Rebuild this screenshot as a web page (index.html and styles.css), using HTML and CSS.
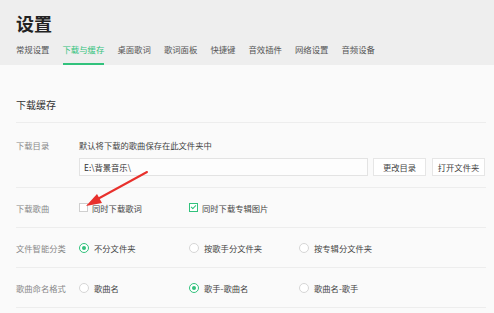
FILE: index.html
```html
<!DOCTYPE html>
<html lang="zh-CN">
<head>
    <meta charset="UTF-8">
    <meta name="viewport" content="width=device-width, initial-scale=1.0">
    <title>设置</title>
    <link rel="stylesheet" href="styles.css">
</head>
<body>
    <!-- Header -->
    <header class="header">
        <h1 class="title">设置</h1>
        <nav class="tabs">
            <a href="#" class="tab">常规设置</a>
            <a href="#" class="tab active">下载与缓存</a>
            <a href="#" class="tab">桌面歌词</a>
            <a href="#" class="tab">歌词面板</a>
            <a href="#" class="tab">快捷键</a>
            <a href="#" class="tab">音效插件</a>
            <a href="#" class="tab">网络设置</a>
            <a href="#" class="tab">音频设备</a>
        </nav>
    </header>

    <!-- Content -->
    <main class="content">
        <h2 class="section-title">下载缓存</h2>

        <div class="row row-dir">
            <div class="label">下载目录</div>
            <div class="body">
                <p class="hint">默认将下载的歌曲保存在此文件夹中</p>
                <div class="dir-line">
                    <div class="path-box">E:\背景音乐\</div>
                    <button class="btn">更改目录</button>
                    <button class="btn">打开文件夹</button>
                </div>
            </div>
        </div>

        <div class="row">
            <div class="label">下载歌曲</div>
            <div class="options">
                <label class="opt"><span class="check"></span>同时下载歌词</label>
                <label class="opt"><span class="check on"></span>同时下载专辑图片</label>
            </div>
        </div>

        <div class="row">
            <div class="label">文件智能分类</div>
            <div class="options">
                <label class="opt"><span class="radio on"></span>不分文件夹</label>
                <label class="opt"><span class="radio"></span>按歌手分文件夹</label>
                <label class="opt"><span class="radio"></span>按专辑分文件夹</label>
            </div>
        </div>

        <div class="row">
            <div class="label">歌曲命名格式</div>
            <div class="options">
                <label class="opt"><span class="radio"></span>歌曲名</label>
                <label class="opt"><span class="radio on"></span>歌手-歌曲名</label>
                <label class="opt"><span class="radio"></span>歌曲名-歌手</label>
            </div>
        </div>
    </main>

    <!-- red annotation arrow -->
    <svg class="arrow" width="494" height="313" viewBox="0 0 494 313">
        <line x1="147" y1="172" x2="94" y2="201" stroke="#e8302c" stroke-width="2" stroke-linecap="round"/>
        <polygon points="86,206 97,194 102,203" fill="#e8302c"/>
    </svg>
</body>
</html>
```

FILE: styles.css
```css
* {
    margin: 0;
    padding: 0;
    box-sizing: border-box;
}

body {
    font-family: "Noto Sans CJK SC", "Noto Sans", sans-serif;
    background-color: #fafafa;
    color: #333;
    width: 494px;
    height: 313px;
    overflow: hidden;
    position: relative;
}

/* Header */
.header {
    background-color: #eeeeee;
    height: 65px;
    padding: 0 16px;
}

.title {
    font-size: 18px;
    font-weight: bold;
    color: #222;
    line-height: 22px;
    padding-top: 12px;
}

.tabs {
    display: flex;
    gap: 13px;
    margin-top: 9px;
}

.tab {
    font-size: 8.4px;
    color: #555;
    text-decoration: none;
    line-height: 12px;
    padding-bottom: 8px;
    border-bottom: 2px solid transparent;
}

.tab.active {
    color: #31c27c;
    border-bottom-color: #31c27c;
}

/* Content */
.content {
    padding: 0 8px 0 16px;
}

.section-title {
    font-size: 10px;
    font-weight: normal;
    color: #333;
    line-height: 14px;
    padding-top: 33px;
    padding-bottom: 10px;
    border-bottom: 1px solid #ededed;
}

.row {
    display: flex;
    align-items: center;
    height: 40px;
    border-bottom: 1px solid #ededed;
    font-size: 8.3px;
}

.row-dir {
    height: 65px;
    align-items: flex-start;
    padding-top: 16px;
}

.label {
    width: 63px;
    color: #888;
    line-height: 12px;
}

.body {
    flex: 1;
}

.hint {
    line-height: 12px;
    color: #444;
}

.dir-line {
    display: flex;
    align-items: center;
    margin-top: 7px;
}

.path-box {
    width: 289px;
    height: 18px;
    border: 1px solid #e3e3e3;
    background: #fdfdfd;
    padding-left: 4px;
    line-height: 16px;
    color: #333;
}

.btn {
    font-family: inherit;
    font-size: 8.3px;
    color: #444;
    background: #fff;
    border: 1px solid #e6e6e6;
    height: 18px;
    width: 53px;
    margin-left: 5px;
}

.btn + .btn {
    margin-left: 6px;
}

.options {
    display: flex;
    align-items: center;
}

.opt {
    width: 110px;
    display: flex;
    align-items: center;
    color: #444;
    line-height: 12px;
}

.check {
    width: 9px;
    height: 9px;
    border: 1px solid #cfcfcf;
    background: #fff;
    margin-right: 4px;
    position: relative;
}

.check.on {
    border-color: #31c27c;
}

.check.on::after {
    content: "";
    position: absolute;
    left: 2px;
    top: 0;
    width: 2px;
    height: 4px;
    border: solid #31c27c;
    border-width: 0 1px 1px 0;
    transform: rotate(45deg);
}

.radio {
    width: 10px;
    height: 10px;
    border-radius: 50%;
    border: 1px solid #d6d6d6;
    background: #fff;
    margin-right: 5px;
    display: flex;
    align-items: center;
    justify-content: center;
}

.radio.on {
    border-color: #31c27c;
}

.radio.on::after {
    content: "";
    width: 4px;
    height: 4px;
    border-radius: 50%;
    background: #31c27c;
}

/* annotation overlay */
.arrow {
    position: absolute;
    left: 0;
    top: 0;
    pointer-events: none;
}
```
